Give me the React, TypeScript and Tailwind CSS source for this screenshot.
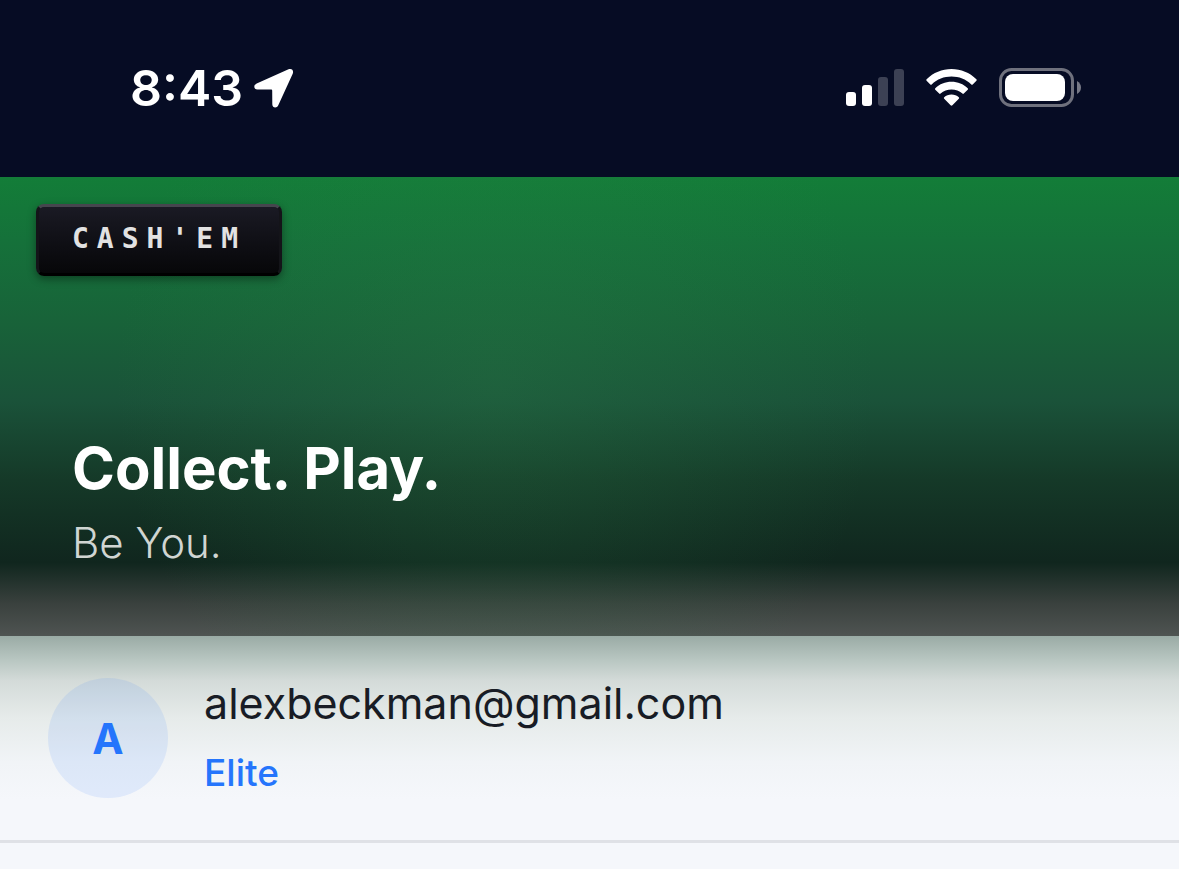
const ACCOUNT = {
  email: 'alexbeckman@gmail.com',
  initial: 'A',
  tier: 'Elite',
};

function StatusBar() {
  return (
    <header className="flex h-[177px] items-center justify-between bg-[#060c24] pb-[2px] pl-[130px] pr-[97px] font-['Inter',sans-serif] text-white">
      <div className="flex items-center gap-[11px]">
        <time className="text-[50px] leading-[60px] font-semibold">8:43</time>
        <svg width="40" height="40" viewBox="0 0 40 40" fill="currentColor" aria-label="Location in use">
          <path d="M34.5 1.3 2.7 15.4C-.9 17.1-.2 21.3 3.4 21.4L17 21.5C17.8 21.5 18.2 21.9 18.2 22.6L18.3 36.2C18.4 40 22.8 40.5 24.3 37.2L38.6 6C40.1 2.5 37.8-.2 34.5 1.3Z" />
        </svg>
      </div>
      <div className="flex items-center gap-[22px]">
        <svg width="58" height="38" viewBox="0 0 58 38" fill="currentColor" aria-label="Signal">
          <rect x="0" y="23" width="10" height="14" rx="3" />
          <rect x="16" y="16" width="10" height="21" rx="3" />
          <rect x="32" y="8" width="10" height="29" rx="3" opacity=".22" />
          <rect x="48" y="0" width="10" height="37" rx="3" opacity=".22" />
        </svg>
        <svg width="51" height="38" viewBox="0 0 51 38" fill="currentColor" aria-label="Wi-Fi">
          <path d="M25.5 0C16 0 7.4 3.7 .6 10.2Q-.1 11 .6 11.7L4.3 15.4Q5 16 5.7 15.4C11.2 10.3 18 7.6 25.5 7.6S39.8 10.3 45.3 15.4Q46 16 46.7 15.4L50.4 11.7Q51.1 11 50.4 10.2C43.6 3.7 35 0 25.5 0Z" />
          <path d="M25.5 12.8C19.2 12.8 13.6 15.1 9.3 19.2Q8.6 20 9.3 20.7L13.2 24.6Q13.9 25.2 14.6 24.6C17.6 21.9 21.3 20.5 25.5 20.5S33.4 21.9 36.4 24.6Q37.1 25.2 37.8 24.6L41.7 20.7Q42.4 20 41.7 19.2C37.4 15.1 31.8 12.8 25.5 12.8Z" />
          <path d="M25.5 25.6C22.6 25.6 20.2 26.6 18.2 28.2Q17.4 29 18.2 29.8L24.6 36.3Q25.5 37.1 26.4 36.3L32.8 29.8Q33.6 29 32.8 28.2C30.8 26.6 28.4 25.6 25.5 25.6Z" />
        </svg>
        <svg width="83" height="39" viewBox="0 0 83 39" aria-label="Battery">
          <rect x="1.5" y="1.5" width="72" height="36" rx="11" fill="none" stroke="#6f717d" strokeWidth="3" />
          <rect x="6" y="6" width="60" height="27" rx="8" fill="#fff" />
          <path d="M78 13Q82 15.5 82 19.5T78 26Z" fill="#777986" />
        </svg>
      </div>
    </header>
  );
}

function Hero() {
  return (
    <section className="bg-[linear-gradient(180deg,#137d38_0%,#15713a_14%,#186339_31%,#1a5239_49%,#153928_66%,#10261e_84%,#3a413e_93%,#4f5452_100%)]">
      <div className="flex min-h-[459px] flex-col items-start justify-between bg-[radial-gradient(ellipse_380px_400px_at_42%_45%,#2b7f4748,#2b7f4700)] px-9 pt-[27px] pb-[57px]">
        <button
          type="button"
          className="rounded-lg border-3 border-x-[#141419] border-t-[#46454e] border-b-black bg-linear-to-b from-[#1a1a24] to-[#070709] px-[33px] pt-[15px] pb-[17px] font-['DejaVu_Sans_Mono',monospace] text-[28px] leading-[34px] font-bold tracking-[8px] text-[#e2e2e2] shadow-[0_3px_9px_#0006]"
        >
          CASH'EM
        </button>
        <div className="px-9 font-['Inter',sans-serif]">
          <h1 className="text-[58px] leading-[78px] font-bold text-white">Collect. Play.</h1>
          <p className="text-[42px] leading-[72px] font-light text-[#d0d5d2]">Be You.</p>
        </div>
      </div>
    </section>
  );
}

function AccountRow() {
  return (
    <section className="flex items-center gap-9 border-b-3 border-[#dfe1e6] bg-[linear-gradient(180deg,#9aaba5_0%,#b9c7c2_12%,#d4dbd9_22%,#e6ebea_40%,#f1f4f7_62%,#f5f7fb_80%)] px-12 py-[42px]">
      <div className="flex size-[120px] shrink-0 items-center justify-center rounded-full bg-[#2575fc]/10 font-['Inter',sans-serif] text-[42px] font-bold text-[#2575fc]">
        {ACCOUNT.initial}
      </div>
      <div className="flex flex-col gap-5 font-['Inter',sans-serif]">
        <p className="text-[43px] leading-[50px] text-[#181c25]">{ACCOUNT.email}</p>
        <p className="text-[37px] leading-[50px] font-medium text-[#2575fc]">{ACCOUNT.tier}</p>
      </div>
    </section>
  );
}

export default function App() {
  return (
    <main className="min-h-screen bg-[#f5f7fb]">
      <StatusBar />
      <Hero />
      <AccountRow />
    </main>
  );
}
